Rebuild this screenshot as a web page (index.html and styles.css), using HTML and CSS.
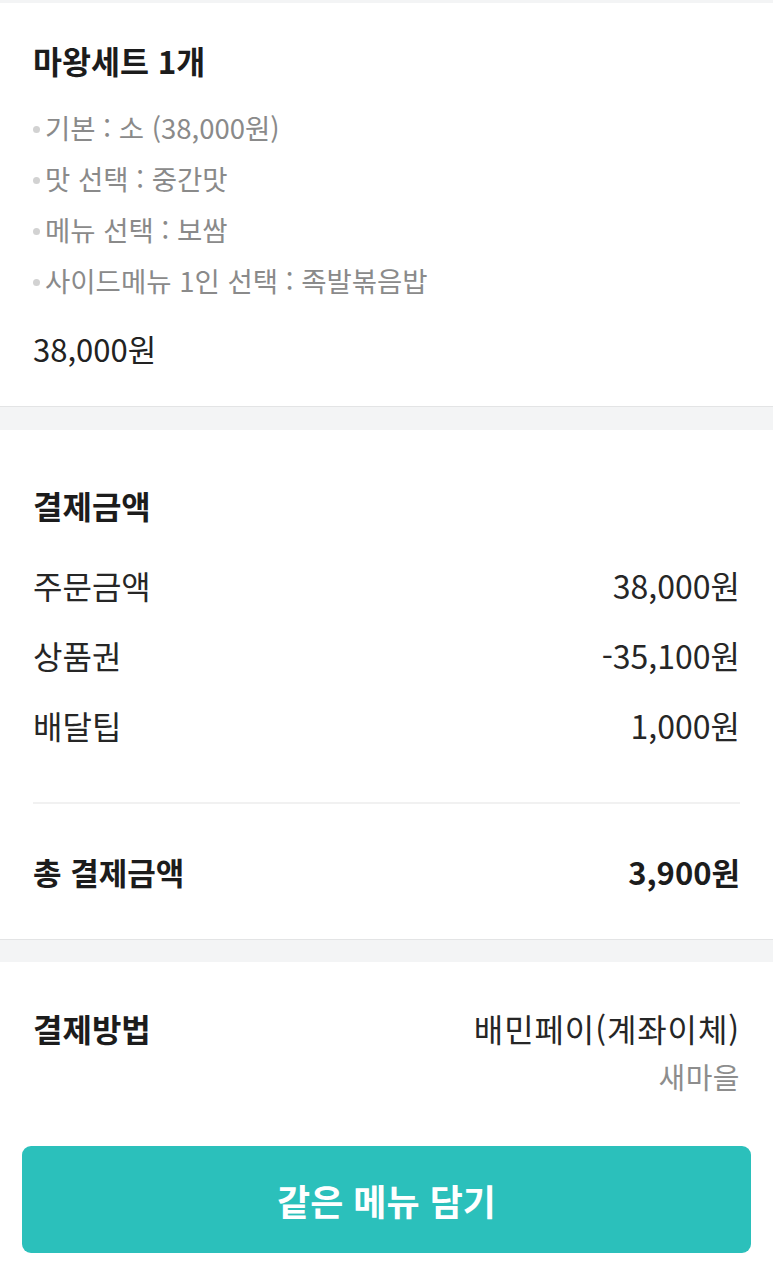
FILE: index.html
```html
<!DOCTYPE html>
<html lang="ko">
<head>
<meta charset="utf-8">
<link rel="stylesheet" href="styles.css">
</head>
<body>
<div class="page">
  <div class="top-strip"></div>
  <section class="card menu-card">
    <h2 class="menu-title">마왕세트 1개</h2>
    <ul class="options">
      <li>기본 : 소 (38,000원)</li>
      <li>맛 선택 : 중간맛</li>
      <li>메뉴 선택 : 보쌈</li>
      <li>사이드메뉴 1인 선택 : 족발볶음밥</li>
    </ul>
    <div class="menu-price">38,000원</div>
  </section>
  <div class="gap"></div>
  <section class="card pay-card">
    <h2 class="section-title">결제금액</h2>
    <div class="rows">
      <div class="row"><span>주문금액</span><span>38,000원</span></div>
      <div class="row"><span>상품권</span><span>-35,100원</span></div>
      <div class="row"><span>배달팁</span><span>1,000원</span></div>
    </div>
    <div class="divider"></div>
    <div class="row total"><span>총 결제금액</span><span>3,900원</span></div>
  </section>
  <div class="gap gap-2"></div>
  <section class="card method-card">
    <div class="method">
      <h2 class="section-title">결제방법</h2>
      <div class="method-info">
        <div class="method-name">배민페이(계좌이체)</div>
        <div class="method-bank">새마을</div>
      </div>
    </div>
    <button class="cta">같은 메뉴 담기</button>
  </section>
</div>
</body>
</html>
```
FILE: styles.css
```css
* { box-sizing: border-box; }
html, body { margin: 0; padding: 0; background: #fff; }
body {
  font-family: "Noto Sans CJK KR", "Noto Sans", sans-serif;
  color: #1f1f1f;
}
.page { width: 773px; }
.top-strip { height: 3px; background: #f3f4f5; }
.card { background: #fff; padding: 0 33px; }
.gap {
  height: 24px;
  background: #f3f4f5;
  border-top: 1px solid #e3e4e5;
}
.gap-2 { height: 23px; }
.menu-card { padding-top: 35px; padding-bottom: 37px; }
.menu-title {
  margin: 0;
  font-size: 31.5px;
  font-weight: 700;
  line-height: 44px;
  color: #1c1c1c;
}
.options {
  list-style: none;
  margin: 20px 0 0;
  padding: 0;
}
.options li {
  position: relative;
  padding-left: 12px;
  font-size: 27.5px;
  line-height: 51px;
  color: #8a8a8a;
}
.options li::before {
  content: "";
  position: absolute;
  left: 0;
  top: 24px;
  width: 7px;
  height: 7px;
  border-radius: 50%;
  background: #d2d2d2;
}
.menu-price {
  margin-top: 23px;
  font-size: 31px;
  line-height: 40px;
  color: #222;
}
.pay-card { padding-top: 53px; padding-bottom: 47px; }
.section-title {
  margin: 0;
  font-size: 32px;
  font-weight: 700;
  line-height: 44px;
  color: #1c1c1c;
}
.rows { margin-top: 38px; display: flex; flex-direction: column; gap: 30px; }
.row {
  display: flex;
  justify-content: space-between;
  font-size: 32px;
  line-height: 40px;
  color: #262626;
}
.divider { height: 2px; background: #f1f1f1; margin: 57px 0 48px; }
.row.total { font-weight: 700; font-size: 31px; color: #1c1c1c; }
.method-card { padding-top: 44px; padding-bottom: 21px; }
.method { display: flex; justify-content: space-between; align-items: flex-start; }
.method-info { text-align: right; }
.method-name { font-size: 32px; line-height: 44px; color: #262626; letter-spacing: 0.9px; }
.method-bank { font-size: 29px; line-height: 40px; color: #8d8d8d; margin-top: 6px; letter-spacing: 0.5px; }
.cta {
  display: block;
  width: 729px;
  height: 107px;
  margin: 50px 0 0 -11px;
  border: none;
  border-radius: 9px;
  background: #2bc0bb;
  color: #fff;
  font-family: inherit;
  font-size: 36px;
  font-weight: 700;
}
```
